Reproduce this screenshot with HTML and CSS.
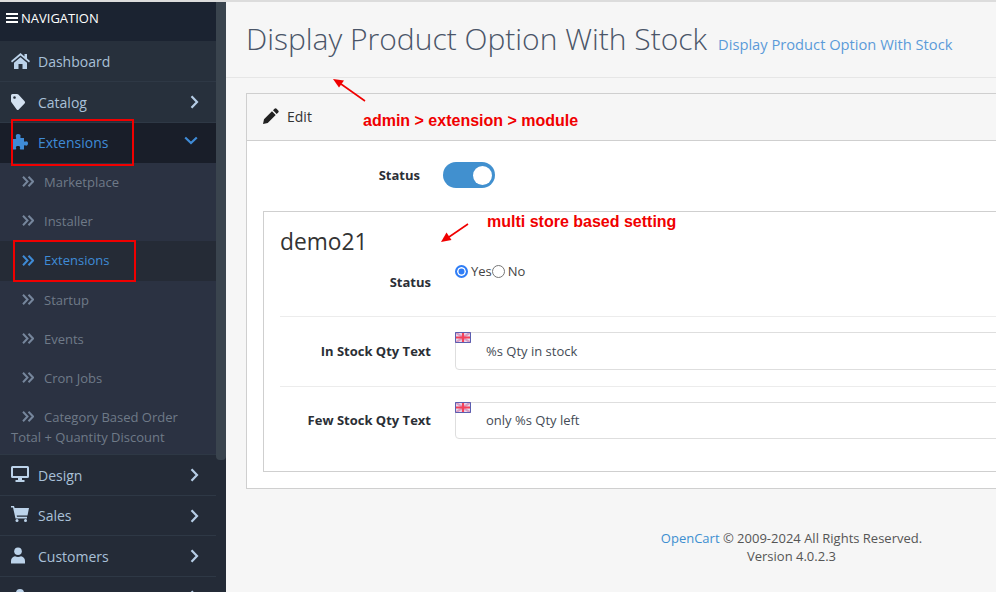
FILE: index.html
```html
<!DOCTYPE html>
<html lang="en">
<head>
<meta charset="utf-8">
<title>Display Product Option With Stock</title>
<link rel="stylesheet" href="styles.css">
</head>
<body>
<svg class="defs" width="0" height="0" aria-hidden="true">
  <defs>
    <symbol id="chev2" viewBox="0 0 12 11"><path d="M1 .8 5.500 5.500 1 10.200M6.500 .8 11 5.500 6.500 10.200" fill="none" stroke="currentColor" stroke-width="2"/></symbol>
    <symbol id="right" viewBox="0 0 9 14"><path d="M1.500 1.200 7 7l-5.500 5.800" fill="none" stroke="currentColor" stroke-width="2.200"/></symbol>
    <symbol id="flag" viewBox="0 0 16 11">
      <rect width="16" height="11" fill="#e6dcec"/>
      <path d="M0 0l16 11M16 0 0 11" stroke="#d99ac0" stroke-width="2.200"/>
      <path d="M8 0v11M0 5.500h16" stroke="#f4405a" stroke-width="2.200"/>
      <path d="M.5.500h15v10H.5z" fill="none" stroke="#5b5fb0" stroke-width="1"/>
    </symbol>
  </defs>
</svg>
<div class="app">
  <aside class="sidebar">
    <nav class="nav">
      <div class="nav-head">
        <svg class="bars" viewBox="0 0 12 10"><path d="M0 0h12v2H0zM0 4h12v2H0zM0 8h12v2H0z" fill="currentColor"/></svg>
        <span>NAVIGATION</span>
      </div>
      <a class="item"><svg class="ico" viewBox="0 0 20 16"><path d="M9.500 0 0 8l1 1.400 8.500-7 8.500 7L19 8l-3-2.500V1h-2.500v2.400z" fill="currentColor"/><path d="M3 9.800 9.500 4.300 16 9.800V16h-4.500v-5h-4v5H3z" fill="currentColor"/></svg><span>Dashboard</span></a>
      <a class="item"><svg class="ico tag" viewBox="0 0 20 16"><path d="M0 1.500A1.500 1.500 0 0 1 1.500 0H6a2 2 0 0 1 1.400.6l6.200 6.700a1.500 1.500 0 0 1 0 2.100l-5.800 6a1.500 1.500 0 0 1-2.100 0L.6 8.400A2 2 0 0 1 0 7zM3.500 2.200a1.300 1.300 0 1 0 .01 0z" fill="currentColor" fill-rule="evenodd"/></svg><span>Catalog</span><svg class="arrow"><use href="#right"/></svg></a>
      <a class="item open"><svg class="ico" viewBox="0 0 20 16"><path d="M7 0c2 0 3 1 2.500 2.500-.3.800-.3 1.300.5 1.500h3v3c.2.800.8.800 1.500.5C16 7 17 8 17 9.500s-1 2.500-2.500 2-1.300-.3-1.500.5v3.500H9.500c-.8-.2-.8-.8-.5-1.500.5-1.500-.5-2-2-2s-2.500.5-2 2c.3.700.3 1.300-.5 1.500H1V5h3.500c.8-.2.800-.8.500-1.500C4.500 1.500 5 0 7 0z" fill="currentColor"/></svg><span>Extensions</span><svg class="arrow down" viewBox="0 0 14 9"><path d="M1.200 1.500 7 7l5.800-5.500" fill="none" stroke="currentColor" stroke-width="2.200"/></svg></a>
      <a class="sub"><svg class="dbl"><use href="#chev2"/></svg><span>Marketplace</span></a>
      <a class="sub"><svg class="dbl"><use href="#chev2"/></svg><span>Installer</span></a>
      <a class="sub current"><svg class="dbl"><use href="#chev2"/></svg><span>Extensions</span></a>
      <a class="sub"><svg class="dbl"><use href="#chev2"/></svg><span>Startup</span></a>
      <a class="sub"><svg class="dbl"><use href="#chev2"/></svg><span>Events</span></a>
      <a class="sub"><svg class="dbl"><use href="#chev2"/></svg><span>Cron Jobs</span></a>
      <a class="sub wrap"><svg class="dbl"><use href="#chev2"/></svg><span class="first">Category Based Order</span><br>Total + Quantity Discount</a>
      <a class="item"><svg class="ico" viewBox="0 1 20 16"><path d="M1.500 0h15A1.500 1.500 0 0 1 18 1.500v9a1.500 1.500 0 0 1-1.500 1.500H11v2h2.500v2h-9v-2H7v-2H1.500A1.500 1.500 0 0 1 0 10.500v-9A1.500 1.500 0 0 1 1.500 0zM2 2v8h14V2z" fill="currentColor" fill-rule="evenodd"/></svg><span>Design</span><svg class="arrow"><use href="#right"/></svg></a>
      <a class="item short"><svg class="ico" viewBox="0 2 20 16"><path d="M0 0h3l.6 2H18l-1.500 7.500H5.700l.3 1.300H16V12.500H4.500L2 1.500H0z" fill="currentColor"/><circle cx="6" cy="14.500" r="1.500" fill="currentColor"/><circle cx="14.500" cy="14.500" r="1.500" fill="currentColor"/></svg><span>Sales</span><svg class="arrow"><use href="#right"/></svg></a>
      <a class="item"><svg class="ico" viewBox="0 0.500 20 16"><circle cx="7" cy="3.800" r="3.800" fill="currentColor"/><path d="M0 16v-2.500C0 10.500 2 9 4 8.700c1.800 1.100 4.200 1.100 6 0 2 .3 4 1.800 4 4.800V16z" fill="currentColor"/></svg><span>Customers</span><svg class="arrow"><use href="#right"/></svg></a>
      <a class="item"><svg class="ico" viewBox="0 0 20 16"><circle cx="9" cy="4" r="4" fill="currentColor"/></svg><span></span><svg class="arrow"><use href="#right"/></svg></a>
    </nav>
    <div class="thumb"></div>
  </aside>

  <main class="main">
    <header class="page-head">
      <h1>Display Product Option With Stock</h1>
      <small>Display Product Option With Stock</small>
    </header>

    <section class="card">
      <div class="card-head">
        <svg class="pencil" viewBox="0 0 16 16"><path d="M11.500.8a1.500 1.500 0 0 1 2.100 0l1.600 1.600a1.500 1.500 0 0 1 0 2.100l-1.500 1.500L10 2.300zM9 3.300 12.700 7l-8 8L0 16l1-4.700z" fill="currentColor"/></svg>
        <span>Edit</span>
      </div>
      <div class="card-body">
        <div class="status-row">
          <label class="status-label">Status</label>
          <span class="toggle"><span class="knob"></span></span>
        </div>
        <div class="store">
          <h2>demo21</h2>
          <div class="row radio-row">
            <label class="lbl">Status</label>
            <div class="radios">
              <span class="radio on"></span><span>Yes</span><span class="radio"></span><span class="no">No</span>
            </div>
          </div>
          <div class="row">
            <label class="lbl">In Stock Qty Text</label>
            <div class="field"><svg class="flag"><use href="#flag"/></svg><span>%s Qty in stock</span></div>
          </div>
          <div class="row last">
            <label class="lbl">Few Stock Qty Text</label>
            <div class="field"><svg class="flag"><use href="#flag"/></svg><span>only %s Qty left</span></div>
          </div>
        </div>
      </div>
    </section>

    <footer class="foot">
      <div><a>OpenCart</a> © 2009-2024 All Rights Reserved.</div>
      <div>Version 4.0.2.3</div>
    </footer>
  </main>
</div>

<div class="mark mark-a"></div>
<div class="mark mark-b"></div>
<svg class="arrows" viewBox="0 0 996 592" width="996" height="592" aria-hidden="true">
  <path d="M365 101 341 84" stroke="#f00000" stroke-width="1.600"/>
  <path d="M333 79l11 1.500-5 7z" fill="#f00000"/>
  <path d="M468 224 449 237" stroke="#f00000" stroke-width="1.600"/>
  <path d="M441 242l5.500-9.500 5 7.500z" fill="#f00000"/>
</svg>
<div class="note note-a">admin &gt; extension &gt; module</div>
<div class="note note-b">multi store based setting</div>
</body>
</html>
```
FILE: styles.css
```css
* { box-sizing: border-box; }
html, body { margin: 0; height: 592px; overflow: hidden; }
body {
  position: relative;
  font-family: "Open Sans", sans-serif;
  font-size: 13px;
  color: #3f4752;
  background: #f6f6f6;
}
.defs { position: absolute; }
.app { display: flex; height: 592px; width: 1357px; border-top: 2px solid #dcdcdc; }

/* sidebar */
.sidebar { position: relative; flex: 0 0 226px; background: #242b37; overflow: hidden; }
.nav { width: 216px; }
.thumb { position: absolute; top: 0; right: 0; width: 10px; height: 458px; background: #3a444e; border-radius: 0 0 4px 4px; }
.nav-head {
  display: flex; align-items: center; gap: 3px;
  height: 39px; padding: 0 0 7px 6px;
  background: #1b2331; color: #fff; font-size: 13px;
}
.bars { width: 12px; height: 10px; }
.item {
  display: flex; align-items: center;
  height: 41px; padding: 0 16px 0 11px;
  background: #242b37; border-bottom: 1px solid #2e3845;
  color: #a9c0d8; font-size: 14px;
}
.nav-head + .item, .nav-head + .item + .item { background: #27303c; }
.item.short { height: 40px; }
.item .ico { flex: 0 0 20px; width: 20px; height: 16px; margin-right: 7px; color: #bcd3ea; overflow: visible; }
.item .tag { color: #d3e1f0; }
.item span { flex: 1; }
.arrow { width: 9px; height: 14px; color: #b6cde6; margin-right: 1px; }
.item.open { background: #191e29; border-bottom: 0; height: 40px; padding-bottom: 2px; color: #3f8bd6; }
.item.open .ico { color: #3f8bd6; }
.arrow.down { width: 14px; height: 9px; color: #3f8bd6; margin: -3px 2px 0 0; }
.sub {
  display: flex; align-items: center;
  height: 39px; padding: 0 0 2px 22px;
  background: #2b3242; color: #6f7a88; font-size: 13px;
}
.dbl { width: 12px; height: 11px; margin-right: 10px; color: #76869c; flex: none; }
.sub.current { background: #252b36; color: #3f8bd6; height: 40px; }
.sub.current .dbl { color: #3f8bd6; }
.sub.wrap { display: block; height: 57px; padding: 9px 0 0 11px; line-height: 20px; border-bottom: 1px solid #2e3845; }
.sub.wrap .dbl { margin-left: 11px; }

/* main */
.main { flex: 0 0 1131px; }
.page-head {
  display: flex; align-items: baseline; gap: 11px;
  height: 76px; padding: 15px 0 0 20px;
  border-bottom: 1px solid #e6e6e6;
}
h1 { margin: 0; font-size: 30px; font-weight: 300; color: #4a5568; line-height: 44px; }
small { font-size: 14.700px; color: #5b9bd9; }

.card { margin: 15px 0 0 20px; border: 1px solid #cfcfcf; border-right: 0; background: #fff; height: 396px; }
.card-head {
  display: flex; align-items: center; gap: 8px;
  height: 47px; padding: 0 0 2px 16px;
  background: #f6f6f6; border-bottom: 1px solid #cfcfcf;
  color: #333; font-size: 14px;
}
.pencil { width: 16px; height: 16px; color: #222; }
.card-body { padding: 21px 0 0 16px; }
.status-row { display: flex; align-items: center; height: 26px; }
.status-label { width: 157px; text-align: right; font-weight: 700; font-size: 13px; color: #2b2f36; }
.toggle { display: flex; align-items: center; justify-content: flex-end; width: 52px; height: 26px; margin-left: 23px; padding-right: 3px; border-radius: 13px; background: #4190cf; }
.knob { width: 19px; height: 19px; border-radius: 50%; background: #fff; }

.store { margin-top: 23px; height: 261px; padding: 13px 0 0 16px; border: 1px solid #cfcfcf; border-right: 0; }
h2 { margin: 0; font-size: 22.750px; font-weight: 400; line-height: 33px; color: #333; }
.row { display: flex; padding: 15px 0 16px; border-bottom: 1px solid #ececec; }
.row.last { border-bottom: 0; }
.lbl { flex: 0 0 151px; text-align: right; font-weight: 700; font-size: 13px; color: #2b2f36; line-height: 38px; }
.radio-row { height: 59px; padding: 0; }
.radio-row .lbl { line-height: 18px; padding-top: 15px; }
.radios { display: flex; align-items: center; height: 14px; margin: 6px 0 0 24px; font-size: 13px; color: #444; }
.radio { width: 13px; height: 13px; margin-right: 2px; border-radius: 50%; border: 1px solid #767676; background: #fff; }
.radio.on { border: 2px solid #2f7df6; box-shadow: inset 0 0 0 1.500px #fff; background: #2f7df6; margin-right: 3px; }
.no { margin-left: 1px; }
.field {
  position: relative; flex: 1; margin-left: 24px; height: 38px;
  display: flex; align-items: center; padding-left: 30px;
  border: 1px solid #dedede; border-radius: 4px; background: #fff;
  font-size: 13px; color: #444b55;
}
.last .field { height: 37px; padding-bottom: 1px; }
.last .lbl { line-height: 37px; }
.flag { position: absolute; left: -1px; top: -1px; width: 16px; height: 11px; }

.foot { margin-top: 40px; text-align: center; font-size: 13px; line-height: 18px; color: #555; }
.foot a { color: #3d8fd1; }

/* annotations over the screenshot */
.mark { position: absolute; border: 2px solid #f00000; }
.mark-a { left: 11px; top: 119px; width: 123px; height: 47px; }
.mark-b { left: 13px; top: 240px; width: 123px; height: 42px; }
.arrows { position: absolute; left: 0; top: 0; pointer-events: none; }
.note { position: absolute; font-family: "Liberation Sans", Arial, sans-serif; font-weight: 700; font-size: 16px; line-height: 18px; color: #f00000; white-space: nowrap; }
.note-a { left: 363px; top: 112px; }
.note-b { left: 487px; top: 213px; }
```
